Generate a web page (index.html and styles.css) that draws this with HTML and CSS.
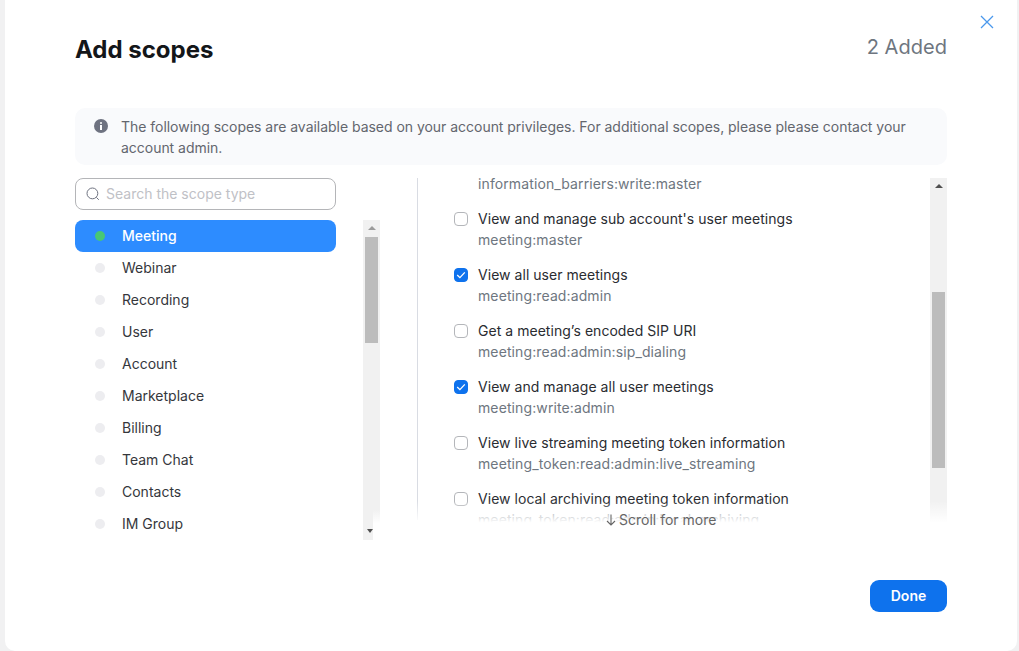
FILE: index.html
```html
<!DOCTYPE html>
<html lang="en">
<head>
<meta charset="utf-8">
<title>Add scopes</title>
<link rel="stylesheet" href="styles.css">
</head>
<body>
<div class="modal">
  <button class="close" aria-label="Close">
    <svg width="14" height="14" viewBox="0 0 14 14"><path d="M1 1L13 13M13 1L1 13" stroke="#4a98ec" stroke-width="1.3" fill="none"/></svg>
  </button>
  <header class="head">
    <h1>Add scopes</h1>
    <span class="added">2 Added</span>
  </header>
  <div class="info">
    <svg class="info-icon" width="14" height="14" viewBox="0 0 14 14"><circle cx="7" cy="7" r="7" fill="#6e7280"/><rect x="6" y="6" width="2" height="5" fill="#fff"/><rect x="6" y="3" width="2" height="2" rx="1" fill="#fff"/></svg>
    <p>The following scopes are available based on your account privileges. For additional scopes, please please contact your account admin.</p>
  </div>
  <div class="body">
    <aside class="left">
      <div class="search">
        <svg width="14" height="14" viewBox="0 0 14 14"><circle cx="6.4" cy="6.4" r="5.4" stroke="#6e7280" stroke-width="1" fill="none"/><path d="M10.4 10.4L12.8 12.8" stroke="#6e7280" stroke-width="1"/></svg>
        <span>Search the scope type</span>
      </div>
      <div class="cats">
        <ul class="catlist">
          <li class="cat active"><i></i>Meeting</li>
          <li class="cat"><i></i>Webinar</li>
          <li class="cat"><i></i>Recording</li>
          <li class="cat"><i></i>User</li>
          <li class="cat"><i></i>Account</li>
          <li class="cat"><i></i>Marketplace</li>
          <li class="cat"><i></i>Billing</li>
          <li class="cat"><i></i>Team Chat</li>
          <li class="cat"><i></i>Contacts</li>
          <li class="cat"><i></i>IM Group</li>
        </ul>
        <div class="bar bar-left">
          <b class="up"></b>
          <b class="thumb"></b>
          <b class="down"></b>
          <em class="bar-fade"></em>
        </div>
      </div>
    </aside>
    <section class="right">
      <div class="scopes">
        <p class="sub first">information_barriers:write:master</p>
        <div class="scope"><span class="box"></span><div><p class="title">View and manage sub account's user meetings</p><p class="sub">meeting:master</p></div></div>
        <div class="scope"><span class="box on"><svg width="10" height="8" viewBox="0 0 10 8"><path d="M1.2 4L3.9 6.6L8.8 1.4" stroke="#fff" stroke-width="1.3" fill="none"/></svg></span><div><p class="title">View all user meetings</p><p class="sub">meeting:read:admin</p></div></div>
        <div class="scope"><span class="box"></span><div><p class="title">Get a meeting’s encoded SIP URI</p><p class="sub">meeting:read:admin:sip_dialing</p></div></div>
        <div class="scope"><span class="box on"><svg width="10" height="8" viewBox="0 0 10 8"><path d="M1.2 4L3.9 6.6L8.8 1.4" stroke="#fff" stroke-width="1.3" fill="none"/></svg></span><div><p class="title">View and manage all user meetings</p><p class="sub">meeting:write:admin</p></div></div>
        <div class="scope"><span class="box"></span><div><p class="title">View live streaming meeting token information</p><p class="sub">meeting_token:read:admin:live_streaming</p></div></div>
        <div class="scope"><span class="box"></span><div><p class="title">View local archiving meeting token information</p><p class="sub">meeting_token:read:admin:local_archiving</p></div></div>
      </div>
      <div class="bar bar-right">
        <b class="up"></b>
        <b class="thumb"></b>
      </div>
      <div class="fade"></div>
      <div class="more">
        <svg width="10" height="12" viewBox="0 0 10 12"><path d="M5 0.5V11M1 7L5 11L9 7" stroke="#666" stroke-width="1.1" fill="none"/></svg>
        <span>Scroll for more</span>
      </div>
    </section>
  </div>
  <footer class="foot"><button class="done">Done</button></footer>
</div>
</body>
</html>
```
FILE: styles.css
```css
* { box-sizing: border-box; }
html, body { margin: 0; height: 100%; }
body {
  background: #f1f1f2;
  font-family: Inter, "Liberation Sans", sans-serif;
  overflow: hidden;
  padding: 0 2px 0 5px;
}
p, h1, ul { margin: 0; padding: 0; }
.modal {
  position: relative;
  height: 651px;
  background: #fff;
  border-radius: 0 0 10px 10px;
  padding: 0 70px;
}
.close {
  position: absolute;
  top: 15px;
  right: 23px;
  width: 14px;
  height: 14px;
  padding: 0;
  border: 0;
  background: none;
  display: flex;
}
.head {
  height: 108px;
  display: flex;
  justify-content: space-between;
  align-items: flex-start;
}
.head h1 {
  font-size: 24px;
  line-height: 30px;
  font-weight: 700;
  color: #131619;
  margin-top: 35px;
}
.added {
  font-size: 20px;
  line-height: 28px;
  color: #6e7680;
  margin-top: 33px;
  letter-spacing: 0.05px;
}
.info {
  height: 57px;
  background: #f9fafc;
  border-radius: 10px;
  padding: 8px 20px 0 19px;
  display: flex;
  gap: 13px;
}
.info-icon { flex: none; margin-top: 3px; }
.info p {
  font-size: 14px;
  line-height: 21px;
  color: #63666e;
  letter-spacing: -0.03px;
}
.body {
  display: flex;
  margin-top: 13px;
}
.left { width: 305px; flex: none; }
.search {
  width: 261px;
  height: 32px;
  border: 1px solid #b4b5b8;
  border-radius: 8px;
  display: flex;
  align-items: center;
  gap: 6px;
  padding-left: 10px;
  font-size: 14px;
  line-height: 18px;
  color: #bfc1c6;
}
.search span { margin-bottom: 1px; }
.cats {
  display: flex;
  justify-content: space-between;
  margin-top: 10px;
  height: 320px;
}
.catlist { list-style: none; width: 261px; }
.cat {
  height: 32px;
  border-radius: 8px;
  display: flex;
  align-items: flex-start;
  padding: 6px 0 0 20px;
  font-size: 14px;
  line-height: 20px;
  color: #35373c;
}
.cat i {
  width: 10px;
  height: 10px;
  border-radius: 50%;
  background: #ededf0;
  margin: 5px 17px 0 0;
}
.cat.active {
  background: #2d8cff;
  color: #fff;
  font-weight: 500;
}
.cat.active i { background: #48c774; }
.bar {
  position: relative;
  width: 17px;
  background: #f1f1f1;
  display: flex;
  flex-direction: column;
  align-items: center;
  flex: none;
}
.bar .up {
  width: 0;
  height: 0;
  margin-top: 6px;
  border: 4px solid transparent;
  border-top: 0;
  border-bottom: 4px solid #9b9b9b;
}
.bar-right .up { border-bottom-color: #505050; }
.bar .thumb {
  width: 13px;
  background: #bcbcbc;
}
.bar-left .thumb { height: 106px; margin-top: 7px; }
.bar-left .down {
  position: absolute;
  left: 4px;
  top: 309px;
  width: 0;
  height: 0;
  border: 3px solid transparent;
  border-bottom: 0;
  border-top: 4px solid #505050;
}
.bar-fade {
  position: absolute;
  right: 0;
  bottom: 0;
  width: 7px;
  height: 30px;
  background: linear-gradient(to bottom, rgba(255,255,255,0), #fff 45%);
}
.right {
  position: relative;
  width: 530px;
  height: 347px;
  margin-left: 37px;
  display: flex;
  justify-content: space-between;
}
.scopes {
  width: 513px;
  height: 347px;
  overflow: hidden;
  background: linear-gradient(#d9dce3, #d9dce3) left top / 1px 342px no-repeat;
  padding-left: 37px;
}
.title, .sub { font-size: 14px; line-height: 21px; }
.title { color: #2a2c31; letter-spacing: 0.04px; }
.sub { color: #6e7680; letter-spacing: 0.11px; }
.first { margin: -5px 0 14px 24px; }
.scope {
  display: flex;
  gap: 10px;
  height: 56px;
}
.box {
  width: 14px;
  height: 14px;
  margin-top: 4px;
  border: 1px solid #b4b6ba;
  border-radius: 4px;
  display: flex;
  align-items: center;
  justify-content: center;
  flex: none;
  background: #fff;
}
.box.on { background: #0e72ed; border-color: #0e72ed; }
.bar-right { height: 347px; }
.bar-right .thumb { height: 176px; margin-top: 104px; }
.fade {
  position: absolute;
  left: 0;
  right: 0;
  bottom: 0;
  height: 24px;
  background: linear-gradient(to bottom, rgba(255,255,255,0), #fff 90%);
}
.more {
  position: absolute;
  left: 189px;
  top: 333px;
  display: flex;
  align-items: center;
  gap: 3px;
  font-size: 14px;
  line-height: 18px;
  color: #666;
}
.foot {
  position: absolute;
  right: 70px;
  top: 580px;
}
.done {
  width: 77px;
  height: 32px;
  border: 0;
  padding: 0 0 2px;
  border-radius: 9px;
  background: #0e72ed;
  color: #fff;
  font: 600 14px Inter, "Liberation Sans", sans-serif;
}
```
